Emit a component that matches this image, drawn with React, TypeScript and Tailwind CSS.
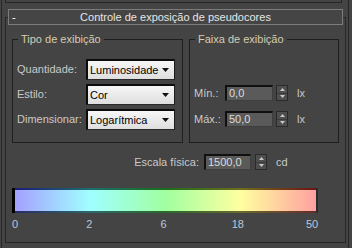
import React from "react";

function Select({ value }: { value: string }) {
  return (
    <div className="w-[89px] h-[21px] border-t-2 border-l-2 border-r border-b border-t-[#0c0c0c] border-l-[#0c0c0c] border-r-[#1c1c1c] border-b-[#2a2a2a] bg-gradient-to-b from-[#f7f7f7] to-[#dedede] flex items-center pl-[2px] pr-[5px] text-black">
      <span className="flex-1">{value}</span>
      <svg width="7" height="4" viewBox="0 0 7 4">
        <path d="M0 0H7L3.5 4Z" fill="#111" />
      </svg>
    </div>
  );
}

function Spinner() {
  return (
    <div className="w-[12px] h-[16px] border border-[#2a2a2a] bg-[#4e4e4e] flex flex-col">
      <div className="flex-1 flex items-center justify-center border-b border-[#3a3a3a]">
        <svg width="5" height="3" viewBox="0 0 5 3">
          <path d="M2.5 0L5 3H0Z" fill="#c8c8c8" />
        </svg>
      </div>
      <div className="flex-1 flex items-center justify-center">
        <svg width="5" height="3" viewBox="0 0 5 3">
          <path d="M0 0H5L2.5 3Z" fill="#c8c8c8" />
        </svg>
      </div>
    </div>
  );
}

function NumInput({ value, w }: { value: string; w: string }) {
  return (
    <div className={`${w} h-[16px] border-t-2 border-l-2 border-r border-b border-t-[#101010] border-l-[#101010] border-r-[#3e3e3e] border-b-[#3e3e3e] bg-[#5a5a5a] flex items-center pl-[2px] text-[#dcdcdc]`}>
      {value}
    </div>
  );
}

export default function App() {
  return (
    <div className="w-[352px] h-[248px] bg-[#444444] overflow-hidden pl-[1px] pr-[3px] font-['Liberation_Sans',Arial,sans-serif] text-[11px] leading-[13px] text-[#c9c9c9]">
      <div className="h-full border-l border-r border-[#272727] flex flex-col">
        <div className="ml-[3px] mr-[6px] h-[3px] border-l border-r border-b border-[#272727]" />
        <div className="relative z-10 mt-[6px] ml-[6px] mr-[5px] h-[16px] border border-[#7c7c7c] bg-[#454545] grid grid-cols-[20px_1fr_20px] items-center">
          <span className="pl-[3px] text-white">-</span>
          <span className="text-center text-[#e6e6e6]">Controle de exposição de pseudocores</span>
          <span />
        </div>
        <div className="-mt-[8px] ml-[3px] mr-[2px] h-[226px] border border-[#272727] pl-[6px] pr-[5px] flex flex-col">
          <div className="mt-[15px] flex gap-[6px]">
            <fieldset className="w-[171px] h-[110px] border border-[#1e1e1e]">
              <legend className="ml-[5px] px-[3px] text-[#d4cdb0]">Tipo de exibição</legend>
              <div className="pt-[13px] pl-[4px] flex flex-col gap-[4px]">
                <div className="h-[21px] flex items-center">
                  <span className="w-[69px]">Quantidade:</span>
                  <Select value="Luminosidade" />
                </div>
                <div className="h-[21px] flex items-center">
                  <span className="w-[69px]">Estilo:</span>
                  <Select value="Cor" />
                </div>
                <div className="h-[21px] flex items-center">
                  <span className="w-[69px]">Dimensionar:</span>
                  <Select value="Logarítmica" />
                </div>
              </div>
            </fieldset>
            <fieldset className="w-[150px] h-[110px] border border-[#1e1e1e]">
              <legend className="ml-[5px] px-[3px] text-[#d4cdb0]">Faixa de exibição</legend>
              <div className="pt-[39px] pl-[4px] flex flex-col gap-[10px]">
                <div className="h-[16px] flex items-center">
                  <span className="w-[31px]">Mín.:</span>
                  <NumInput value="0,0" w="w-[48px]" />
                  <div className="ml-[3px]">
                    <Spinner />
                  </div>
                  <span className="ml-[9px]">lx</span>
                </div>
                <div className="h-[16px] flex items-center">
                  <span className="w-[31px]">Máx.:</span>
                  <NumInput value="50,0" w="w-[48px]" />
                  <div className="ml-[3px]">
                    <Spinner />
                  </div>
                  <span className="ml-[9px]">lx</span>
                </div>
              </div>
            </fieldset>
          </div>
          <div className="mt-[11px] h-[16px] flex items-center ml-[117px]">
            <span className="w-[70px] text-right mr-[5px]">Escala física:</span>
            <NumInput value="1500,0" w="w-[47px]" />
            <div className="ml-[4px]">
              <Spinner />
            </div>
            <span className="ml-[9px]">cd</span>
          </div>
          <div className="mt-[18px] w-[306px] h-[25px] border-l-[3px] border-l-black border-r-[2px] border-r-[#2c2c2c] flex flex-col">
            <div className="h-[2px] bg-[linear-gradient(to_right,#1c1c78,#1c6e6e_25%,#1c6e1c_50%,#6e6e1c_75%,#6e1414)]" />
            <div className="flex-1 bg-[linear-gradient(to_right,#a4a0ff,#a0ffff_25%,#a0ffa0_50%,#ffffa0_75%,#ffa0a0)]" />
            <div className="h-[2px] bg-[linear-gradient(to_right,#2a2a6a,#2a6a6a_25%,#2a6a2a_50%,#6a6a2a_75%,#6a2a2a)]" />
          </div>
          <div className="mt-[5px] -ml-[7px] w-[317px] flex justify-between text-[#b9c9da]">
            <span className="w-[20px] text-center">0</span>
            <span className="w-[20px] text-center">2</span>
            <span className="w-[20px] text-center">6</span>
            <span className="w-[20px] text-center">18</span>
            <span className="w-[20px] text-center">50</span>
          </div>
        </div>
      </div>
    </div>
  );
}
